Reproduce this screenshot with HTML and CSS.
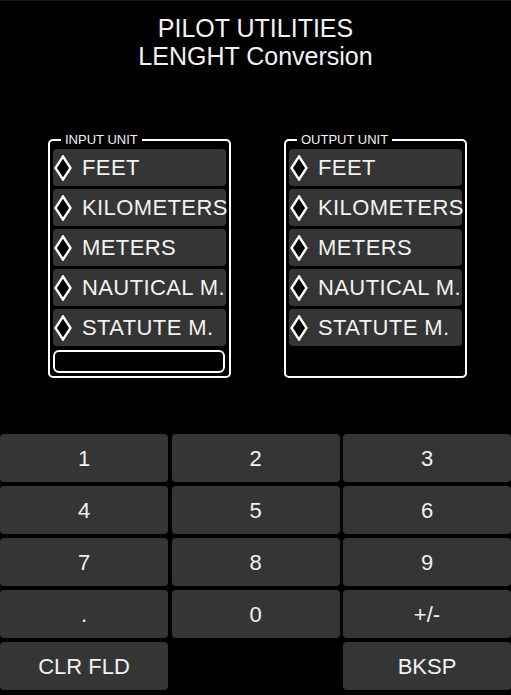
FILE: index.html
```html
<!DOCTYPE html>
<html>
<head>
<meta charset="utf-8">
<link rel="stylesheet" href="styles.css">
</head>
<body>
<div class="screen">
  <header class="title">
    <div>PILOT UTILITIES</div>
    <div>LENGHT Conversion</div>
  </header>
  <div class="groups">
    <section class="group">
      <div class="legend">INPUT UNIT</div>
      <div class="list">
        <div class="item"><svg class="dia" viewBox="0 0 18 26"><polygon points="9,1.5 16.5,13 9,24.5 1.5,13"/></svg><span>FEET</span></div>
        <div class="item"><svg class="dia" viewBox="0 0 18 26"><polygon points="9,1.5 16.5,13 9,24.5 1.5,13"/></svg><span>KILOMETERS</span></div>
        <div class="item"><svg class="dia" viewBox="0 0 18 26"><polygon points="9,1.5 16.5,13 9,24.5 1.5,13"/></svg><span>METERS</span></div>
        <div class="item"><svg class="dia" viewBox="0 0 18 26"><polygon points="9,1.5 16.5,13 9,24.5 1.5,13"/></svg><span>NAUTICAL M.</span></div>
        <div class="item"><svg class="dia" viewBox="0 0 18 26"><polygon points="9,1.5 16.5,13 9,24.5 1.5,13"/></svg><span>STATUTE M.</span></div>
        <div class="field"></div>
      </div>
    </section>
    <section class="group">
      <div class="legend">OUTPUT UNIT</div>
      <div class="list">
        <div class="item"><svg class="dia" viewBox="0 0 18 26"><polygon points="9,1.5 16.5,13 9,24.5 1.5,13"/></svg><span>FEET</span></div>
        <div class="item"><svg class="dia" viewBox="0 0 18 26"><polygon points="9,1.5 16.5,13 9,24.5 1.5,13"/></svg><span>KILOMETERS</span></div>
        <div class="item"><svg class="dia" viewBox="0 0 18 26"><polygon points="9,1.5 16.5,13 9,24.5 1.5,13"/></svg><span>METERS</span></div>
        <div class="item"><svg class="dia" viewBox="0 0 18 26"><polygon points="9,1.5 16.5,13 9,24.5 1.5,13"/></svg><span>NAUTICAL M.</span></div>
        <div class="item"><svg class="dia" viewBox="0 0 18 26"><polygon points="9,1.5 16.5,13 9,24.5 1.5,13"/></svg><span>STATUTE M.</span></div>
      </div>
    </section>
  </div>
  <div class="keypad">
    <div class="key">1</div>
    <div class="key">2</div>
    <div class="key">3</div>
    <div class="key">4</div>
    <div class="key">5</div>
    <div class="key">6</div>
    <div class="key">7</div>
    <div class="key">8</div>
    <div class="key">9</div>
    <div class="key">.</div>
    <div class="key">0</div>
    <div class="key">+/-</div>
    <div class="key">CLR FLD</div>
    <div class="blank"></div>
    <div class="key">BKSP</div>
  </div>
</div>
</body>
</html>
```
FILE: styles.css
```css
html, body {
  margin: 0;
  padding: 0;
  background: #000;
}
.screen {
  width: 511px;
  height: 695px;
  box-sizing: border-box;
  border-top: 1px solid #161616;
  background: #000;
  color: #f2f2f2;
  font-family: "Liberation Sans", Arial, sans-serif;
  overflow: hidden;
}
.title {
  padding-top: 13px;
  text-align: center;
  font-size: 25px;
  line-height: 28px;
}
.groups {
  display: flex;
  gap: 53px;
  padding-left: 48px;
  margin-top: 69px;
}
.group {
  width: 183px;
  height: 239px;
  box-sizing: border-box;
  border: 2px solid #fff;
  border-radius: 5px;
  padding: 7px 3px 3px 3px;
}
.legend {
  width: fit-content;
  margin: -16px 0 2px 8px;
  padding: 0 4px;
  background: #000;
  font-size: 13px;
  line-height: 15px;
}
.list {
  display: flex;
  flex-direction: column;
  gap: 3px;
}
.item {
  height: 37px;
  background: #353535;
  border-radius: 4px;
  display: flex;
  align-items: center;
  font-size: 22px;
  letter-spacing: 0.4px;
  white-space: nowrap;
}
.dia {
  width: 18px;
  height: 26px;
  margin-left: 1px;
  margin-right: 10px;
  flex: none;
}
.dia polygon {
  fill: #000;
  stroke: #fff;
  stroke-width: 2.4;
}
.field {
  margin-top: 1px;
  width: 172px;
  height: 23px;
  box-sizing: border-box;
  border: 2px solid #fff;
  border-radius: 6px;
}
.keypad {
  margin-top: 56px;
  display: grid;
  grid-template-columns: repeat(3, 1fr);
  grid-auto-rows: 48px;
  gap: 4px 3.5px;
  width: 511px;
}
.key {
  background: #353535;
  border-radius: 4px;
  display: flex;
  align-items: center;
  justify-content: center;
  font-size: 22px;
  padding-top: 2px;
  box-sizing: border-box;
}
```
